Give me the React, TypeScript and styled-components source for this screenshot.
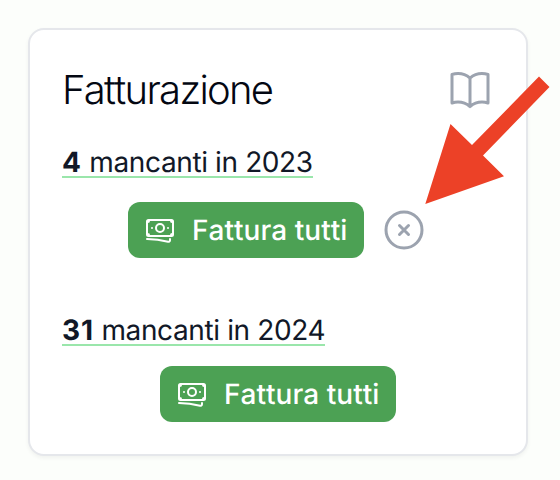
import React from 'react';
import styled, { createGlobalStyle } from 'styled-components';

const GlobalStyle = createGlobalStyle`
  *, *::before, *::after { box-sizing: border-box; }
  body {
    margin: 0;
    background: #fcfefb;
    color: #111827;
    font-family: Inter, 'Liberation Sans', sans-serif;
    text-rendering: geometricPrecision;
    -webkit-font-smoothing: antialiased;
  }
`;

const Page = styled.main`
  position: relative;
  width: 560px;
  height: 480px;
  padding: 28px 32px 24px 28px;
  overflow: hidden;
`;

const Card = styled.section`
  width: 500px;
  height: 428px;
  padding: 32px;
  border: 2px solid #e5e7eb;
  border-radius: 16px;
  background: #fff;
  box-shadow: 0 2px 4px rgba(0, 0, 0, 0.05);
`;

const Header = styled.header`
  display: flex;
  align-items: center;
  justify-content: space-between;
  height: 56px;
`;

const Title = styled.h2`
  margin: 0;
  font-size: 40px;
  line-height: 56px;
  font-weight: 300;
  letter-spacing: -1.7px;
  font-kerning: none;
  color: #030712;
`;

const Group = styled.section<{ $gap: number }>`
  margin-top: ${({ $gap }) => $gap}px;
`;

const Missing = styled.a`
  display: block;
  width: fit-content;
  height: 34px;
  border-bottom: 2px solid #9ae6ab;
  font-size: 28px;
  line-height: 36px;
  letter-spacing: -0.38px;
  white-space: nowrap;

  strong {
    font-weight: 700;
    letter-spacing: 0.9px;
  }
`;

const Actions = styled.div<{ $gap: number }>`
  display: flex;
  align-items: center;
  justify-content: center;
  gap: 16px;
  height: 56px;
  margin-top: ${({ $gap }) => $gap}px;
`;

const InvoiceButton = styled.button`
  display: flex;
  align-items: center;
  gap: 16px;
  width: 236px;
  height: 56px;
  padding: 0 0 0 16px;
  border: 0;
  border-radius: 12px;
  background: #4ca154;
  color: #fff;
  font: 500 28px/40px Inter, 'Liberation Sans', sans-serif;
  font-kerning: none;
  letter-spacing: 0.03px;
  text-rendering: geometricPrecision;
  white-space: nowrap;
`;

const IconButton = styled.button`
  display: flex;
  flex: none;
  padding: 0;
  border: 0;
  background: none;
  color: #9ca3af;
`;

const Icon = styled.svg<{ $size: number }>`
  display: block;
  flex: none;
  width: ${({ $size }) => $size}px;
  height: ${({ $size }) => $size}px;
  fill: none;
  stroke: currentColor;
  stroke-width: 1.5;
  stroke-linecap: round;
  stroke-linejoin: round;
`;

const Pointer = styled.svg`
  position: absolute;
  top: 0;
  left: 0;
  width: 560px;
  height: 480px;
  pointer-events: none;
`;

const BookIcon = () => (
  <Icon $size={48} viewBox="0 0 24 24">
    <path d="M12 6.042A8.967 8.967 0 0 0 6 3.75c-1.052 0-2.062.18-3 .512v14.25A8.987 8.987 0 0 1 6 18c2.305 0 4.408.867 6 2.292m0-14.25a8.966 8.966 0 0 1 6-2.292c1.052 0 2.062.18 3 .512v14.25A8.987 8.987 0 0 0 18 18a8.967 8.967 0 0 0-6 2.292m0-14.25v14.25" />
  </Icon>
);

const BanknotesIcon = () => (
  <Icon $size={32} viewBox="0 0 24 24">
    <path d="M2.25 18.75a60.07 60.07 0 0 1 15.797 2.101c.727.198 1.453-.342 1.453-1.096V18.75M3.75 4.5v.75A.75.75 0 0 1 3 6h-.75m0 0v-.375c0-.621.504-1.125 1.125-1.125H20.25M2.25 6v9m18-10.5v.75c0 .414.336.75.75.75h.75m-1.5-1.5h.375c.621 0 1.125.504 1.125 1.125v9.75c0 .621-.504 1.125-1.125 1.125h-.375m1.5-1.5H21a.75.75 0 0 0-.75.75v.75m0 0H3.75m0 0h-.375a1.125 1.125 0 0 1-1.125-1.125V15m1.5 1.5v-.75A.75.75 0 0 0 3 15h-.75M15 10.5a3 3 0 1 1-6 0 3 3 0 0 1 6 0Zm3 0h.008v.008H18V10.5Zm-12 0h.008v.008H6V10.5Z" />
  </Icon>
);

const CloseIcon = () => (
  <Icon $size={48} viewBox="0 0 24 24">
    <path d="m9.75 9.75 4.5 4.5m0-4.5-4.5 4.5M21 12a9 9 0 1 1-18 0 9 9 0 0 1 18 0Z" />
  </Icon>
);

const years = [
  { year: 2023, count: 4, gap: 26, actionGap: 24, dismissible: true },
  { year: 2024, count: 31, gap: 54, actionGap: 20, dismissible: false },
];

export default function App() {
  return (
    <>
      <GlobalStyle />
      <Page>
        <Card>
          <Header>
            <Title>Fatturazione</Title>
            <IconButton aria-label="Guida"><BookIcon /></IconButton>
          </Header>
          {years.map(({ year, count, gap, actionGap, dismissible }) => (
            <Group key={year} $gap={gap}>
              <Missing><strong>{count}</strong> mancanti in {year}</Missing>
              <Actions $gap={actionGap}>
                <InvoiceButton><BanknotesIcon />Fattura tutti</InvoiceButton>
                {dismissible && <IconButton aria-label="Ignora"><CloseIcon /></IconButton>}
              </Actions>
            </Group>
          ))}
        </Card>
        <Pointer viewBox="0 0 560 480" aria-hidden="true">
          <path fill="#ec4127" d="M425.3 204 450.5 124 472 145 539 76.5 549.5 87 483 155.5 504 176.3Z" />
        </Pointer>
      </Page>
    </>
  );
}
